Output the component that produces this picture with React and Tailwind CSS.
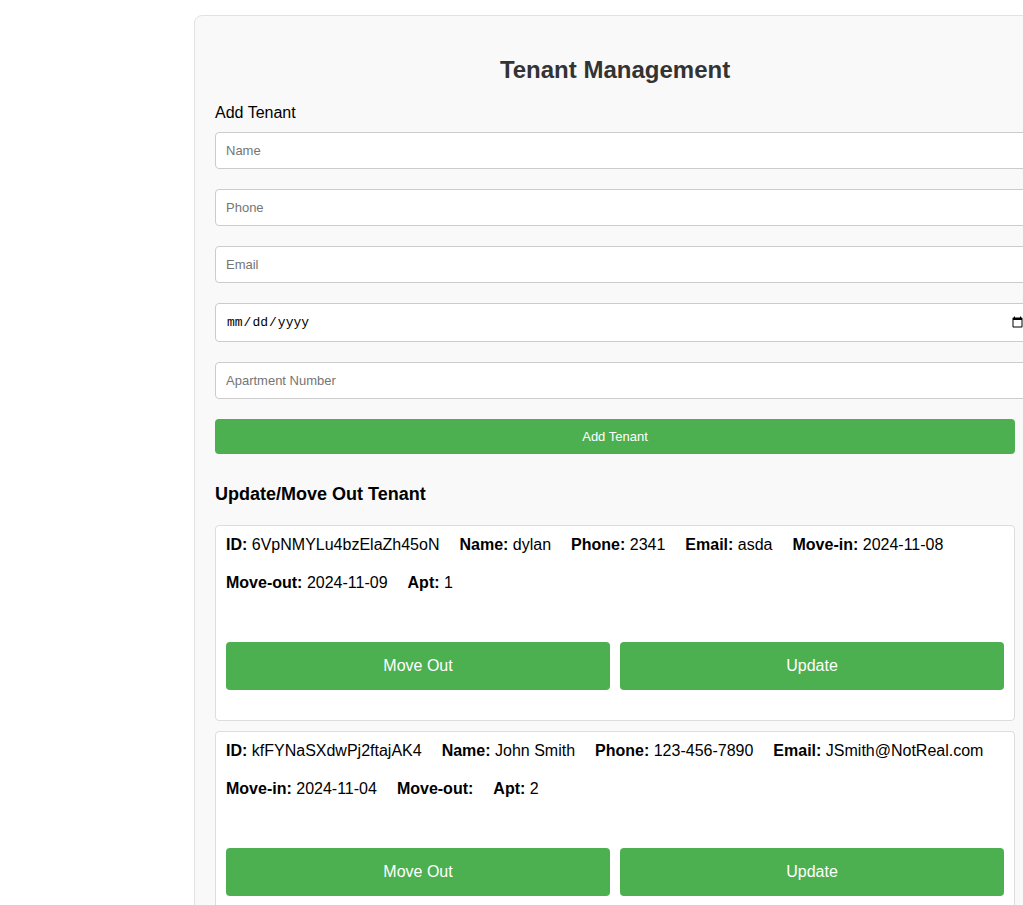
import React, { useState } from 'react';

const tenants = [
  {
    id: '6VpNMYLu4bzElaZh45oN',
    name: 'dylan',
    phone: '2341',
    email: 'asda',
    moveIn: '2024-11-08',
    moveOut: '2024-11-09',
    apt: '1',
  },
  {
    id: 'kfFYNaSXdwPj2ftajAK4',
    name: 'John Smith',
    phone: '123-456-7890',
    email: 'JSmith@NotReal.com',
    moveIn: '2024-11-04',
    moveOut: '',
    apt: '2',
  },
];

const inputCls =
  'box-content block w-full px-[10px] py-[10px] mb-5 border border-[#ccc] rounded bg-white text-[13px] leading-[15px] text-black placeholder:text-[#757575] outline-none';

const Field = ({ label, value }) => (
  <span className="whitespace-nowrap">
    <b className="font-bold">{label}</b> {value}
  </span>
);

const TenantCard = ({ t }) => (
  <div className="bg-white border border-[#ddd] rounded pt-[10px] px-[10px] pb-[30px] mb-[10px]">
    <div className="flex flex-wrap gap-x-5 gap-y-5 text-base leading-[18px] text-black">
      <Field label="ID:" value={t.id} />
      <Field label="Name:" value={t.name} />
      <Field label="Phone:" value={t.phone} />
      <Field label="Email:" value={t.email} />
      <Field label="Move-in:" value={t.moveIn} />
      <Field label="Move-out:" value={t.moveOut} />
      <Field label="Apt:" value={t.apt} />
    </div>
    <div className="flex gap-[10px] mt-[50px]">
      <button className="flex-1 h-[48px] bg-[#4caf50] text-white text-base rounded">Move Out</button>
      <button className="flex-1 h-[48px] bg-[#4caf50] text-white text-base rounded">Update</button>
    </div>
  </div>
);

export default function App() {
  const [form, setForm] = useState({ name: '', phone: '', email: '', date: '', apt: '' });
  const set = (k) => (e) => setForm({ ...form, [k]: e.target.value });

  return (
    <div className="h-screen overflow-hidden bg-white font-['Liberation_Sans',Arial,sans-serif]">
      <div className="ml-[194px] mt-[15px] w-[842px] p-5 bg-[#f9f9f9] border border-[#e2e2e2] rounded-lg">
        <h2 className="mt-5 mb-5 text-center text-2xl leading-[28px] font-bold text-[#333]">
          Tenant Management
        </h2>
        <div className="text-base leading-[18px] text-black mb-[10px]">Add Tenant</div>
        <input className={inputCls} placeholder="Name" value={form.name} onChange={set('name')} />
        <input className={inputCls} placeholder="Phone" value={form.phone} onChange={set('phone')} />
        <input className={inputCls} placeholder="Email" value={form.email} onChange={set('email')} />
        <input
          type="date"
          className="box-content block w-full px-[10px] py-[10px] mb-5 h-[17px] border border-[#ccc] rounded bg-white text-[13px] leading-[17px] text-black font-['Liberation_Mono',monospace] outline-none"
          value={form.date}
          onChange={set('date')}
        />
        <input className={inputCls} placeholder="Apartment Number" value={form.apt} onChange={set('apt')} />
        <button className="block w-full h-[35px] bg-[#4caf50] text-white text-[13px] rounded">Add Tenant</button>

        <h3 className="mt-[30px] mb-5 text-lg leading-[21px] font-bold text-black">Update/Move Out Tenant</h3>
        {tenants.map((t) => (
          <TenantCard key={t.id} t={t} />
        ))}
      </div>
    </div>
  );
}
